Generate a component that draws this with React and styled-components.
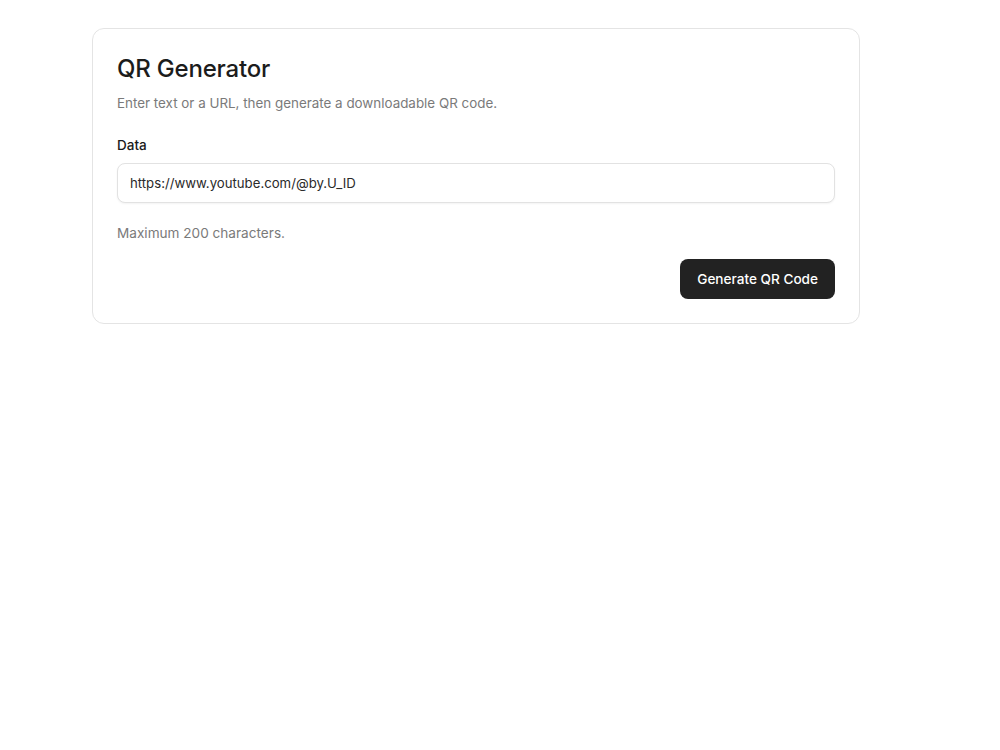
import React, {useState} from "react";
import styled, {createGlobalStyle} from "styled-components";

const GlobalStyle = createGlobalStyle`
  body {
    margin: 0;
    background: #ffffff;
    font-family: Inter, "Noto Sans", sans-serif;
    color: #1f1f1f;
  }
`

const Page = styled.div`
  padding: 28px 0 0 92px;
`

const Card = styled.div`
  box-sizing: border-box;
  width: 768px;
  border: 1px solid #e4e4e4;
  border-radius: 12px;
  padding: 22px 24px 24px;
  display: flex;
  flex-direction: column;
`

const Title = styled.h1`
  margin: 0;
  font-size: 24px;
  font-weight: 500;
  line-height: 36px;
  letter-spacing: -0.2px;
  color: #1c1c1c;
`

const Subtitle = styled.p`
  margin: 6px 0 0;
  font-size: 13.4px;
  line-height: 20px;
  color: #7a7a7a;
`

const Label = styled.label`
  margin-top: 22px;
  font-size: 13.5px;
  font-weight: 500;
  line-height: 20px;
  color: #1a1a1a;
`

const Input = styled.input`
  box-sizing: border-box;
  margin-top: 8px;
  width: 100%;
  height: 40px;
  padding: 0 12px;
  border: 1px solid #e2e2e2;
  border-radius: 8px;
  box-shadow: 0 1px 2px rgba(0, 0, 0, 0.05);
  font-family: inherit;
  font-size: 13.2px;
  color: #2a2a2a;
  outline: none;
`

const Hint = styled.p`
  margin: 20px 0 0;
  font-size: 13.6px;
  line-height: 20px;
  color: #7a7a7a;
`

const Actions = styled.div`
  display: flex;
  justify-content: flex-end;
  margin-top: 16px;
`

const Button = styled.button`
  height: 40px;
  padding: 0 17px;
  border: none;
  border-radius: 8px;
  background: #222222;
  color: #ffffff;
  font-family: inherit;
  font-size: 13.6px;
  font-weight: 500;
  cursor: pointer;
`

export default function App() {
    const [data, setData] = useState("https://www.youtube.com/@by.U_ID")
    return (
        <>
            <GlobalStyle/>
            <Page>
                <Card>
                    <Title>QR Generator</Title>
                    <Subtitle>Enter text or a URL, then generate a downloadable QR code.</Subtitle>
                    <Label htmlFor="data">Data</Label>
                    <Input id="data"
                           value={data}
                           maxLength={200}
                           onChange={event => setData(event.target.value)}/>
                    <Hint>Maximum 200 characters.</Hint>
                    <Actions>
                        <Button>Generate QR Code</Button>
                    </Actions>
                </Card>
            </Page>
        </>
    )
}
